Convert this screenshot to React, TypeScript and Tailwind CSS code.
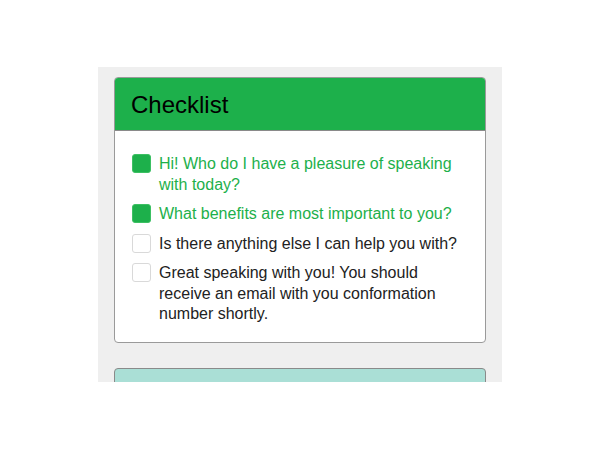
const items = [
  { text: 'Hi! Who do I have a pleasure of speaking with today?', done: true },
  { text: 'What benefits are most important to you?', done: true },
  { text: 'Is there anything else I can help you with?', done: false },
  {
    text: 'Great speaking with you! You should receive an email with you conformation number shortly.',
    done: false,
  },
];

export default function App() {
  return (
    <div className="w-[600px] h-[450px] bg-white pt-[67px] font-['Liberation_Sans',Arial,sans-serif]">
      <div className="mx-auto w-[404px] h-[315px] overflow-hidden bg-[#efefef] px-4 pt-[10px]">
        <div className="rounded-[4px] border border-[#9a9a9a] bg-white overflow-hidden">
          <div className="h-[53px] bg-[#1db04b] border-b border-[#8a8a8a] flex items-center pl-4 pt-[2px]">
            <h1 className="text-[24px] leading-none text-black">Checklist</h1>
          </div>
          <ul className="pl-[17px] pr-4 pt-[23px] pb-[17px] flex flex-col gap-[9px]">
            {items.map((item) => (
              <li key={item.text} className="flex items-start gap-[8px]">
                <span
                  className={
                    item.done
                      ? 'w-[19px] h-[19px] shrink-0 rounded-[3px] bg-[#1db04b] border border-[#3cc063]'
                      : 'w-[19px] h-[19px] shrink-0 rounded-[3px] bg-white border border-[#d9d9d9]'
                  }
                />
                <span
                  className={
                    item.done
                      ? 'text-[16px] leading-[20.5px] text-[#1db04b]'
                      : 'text-[16px] leading-[20.5px] text-[#222]'
                  }
                >
                  {item.text}
                </span>
              </li>
            ))}
          </ul>
        </div>
        <div className="mt-[25px] h-[30px] rounded-[4px] border border-[#8a8a8a] bg-[#aadfd6]" />
      </div>
    </div>
  );
}
